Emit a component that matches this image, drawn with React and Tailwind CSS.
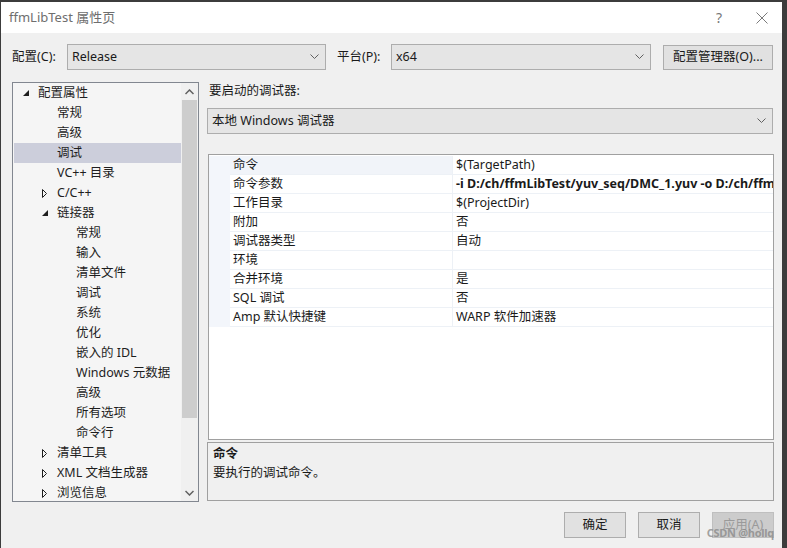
import React from "react";

const FONT = { fontFamily: '"Noto Sans", "Noto Sans CJK SC", sans-serif' };

function Chevron() {
  return (
    <svg width="9" height="6" viewBox="0 0 9 6" className="shrink-0">
      <polyline points="0.5,0.5 4.5,4.5 8.5,0.5" fill="none" stroke="#606060" strokeWidth="1" />
    </svg>
  );
}

function Select({ text, className }) {
  return (
    <div className={"flex items-center justify-between h-[26px] bg-[#e5e5e5] border border-[#adadad] pl-[4px] pr-[6px] text-[12.5px] text-[#1a1a1a] " + className}>
      <span>{text}</span>
      <Chevron />
    </div>
  );
}

function Tri({ open }) {
  if (open)
    return (
      <svg width="6" height="6" viewBox="0 0 6 6">
        <polygon points="6,0 6,6 0,6" fill="#1e1e1e" />
      </svg>
    );
  return (
    <svg width="5" height="9" viewBox="0 0 5 9">
      <polygon points="0.5,0.5 4.5,4.5 0.5,8.5" fill="none" stroke="#1e1e1e" strokeWidth="1" />
    </svg>
  );
}

const tree = [
  { t: "配置属性", l: 0, tri: "open" },
  { t: "常规", l: 1 },
  { t: "高级", l: 1 },
  { t: "调试", l: 1, sel: true },
  { t: "VC++ 目录", l: 1 },
  { t: "C/C++", l: 1, tri: "closed" },
  { t: "链接器", l: 1, tri: "open" },
  { t: "常规", l: 2 },
  { t: "输入", l: 2 },
  { t: "清单文件", l: 2 },
  { t: "调试", l: 2 },
  { t: "系统", l: 2 },
  { t: "优化", l: 2 },
  { t: "嵌入的 IDL", l: 2 },
  { t: "Windows 元数据", l: 2 },
  { t: "高级", l: 2 },
  { t: "所有选项", l: 2 },
  { t: "命令行", l: 2 },
  { t: "清单工具", l: 1, tri: "closed" },
  { t: "XML 文档生成器", l: 1, tri: "closed" },
  { t: "浏览信息", l: 1, tri: "closed" },
];

const props = [
  ["命令", "$(TargetPath)"],
  ["命令参数", "-i D:/ch/ffmLibTest/yuv_seq/DMC_1.yuv -o D:/ch/ffmLibTest/yuv_seq/out.yuv", true],
  ["工作目录", "$(ProjectDir)"],
  ["附加", "否"],
  ["调试器类型", "自动"],
  ["环境", ""],
  ["合并环境", "是"],
  ["SQL 调试", "否"],
  ["Amp 默认快捷键", "WARP 软件加速器"],
];

export default function App() {
  return (
    <div className="w-[787px] h-[548px] bg-[#3c3c3c] pt-[2px] pl-[1px] pr-[5px] overflow-hidden" style={FONT}>
      <div className="w-full h-full flex flex-col bg-[#f0f0f0]">
        {/* title bar */}
        <div className="h-[31px] bg-white flex items-center justify-between pl-[8px] pr-[14px] shrink-0">
          <span className="text-[13px] text-[#6e6e6e]">ffmLibTest 属性页</span>
          <div className="flex items-center gap-[34px]">
            <span className="text-[14px] text-[#777]">?</span>
            <svg width="12" height="12" viewBox="0 0 12 12">
              <path d="M0.5 0.5 L11.5 11.5 M11.5 0.5 L0.5 11.5" stroke="#7a7a7a" strokeWidth="1" />
            </svg>
          </div>
        </div>

        {/* config row */}
        <div className="flex items-center mt-[11px] pl-[11px] text-[12.5px] text-[#1a1a1a]">
          <span className="w-[55px]">配置(C):</span>
          <Select text="Release" className="w-[259px]" />
          <span className="ml-[11px] w-[54px]">平台(P):</span>
          <Select text="x64" className="w-[260px]" />
          <div className="ml-[12px] w-[110px] h-[25px] bg-[#e1e1e1] border border-[#adadad] flex items-center justify-center">
            配置管理器(O)...
          </div>
        </div>

        {/* main */}
        <div className="flex mt-[12px] pl-[11px]">
          {/* tree */}
          <div className="w-[187px] h-[420px] border border-[#828790] bg-[#f5f5f5] flex overflow-hidden">
            <div className="flex-1 pl-[1px] text-[12.5px] text-[#1e1e1e]">
              {tree.map((r, i) => (
                <div
                  key={i}
                  className={"h-[20px] flex items-center relative " + (r.sel ? "bg-[#cccedb]" : "")}
                  style={{ paddingLeft: 24 + r.l * 19 }}
                >
                  {r.tri && (
                    <span className="absolute flex items-center" style={{ left: 9 + r.l * 19 }}>
                      <Tri open={r.tri === "open"} />
                    </span>
                  )}
                  <span>{r.t}</span>
                </div>
              ))}
            </div>
            <div className="w-[17px] bg-[#f0f0f0] flex flex-col">
              <div className="h-[17px] flex items-center justify-center">
                <svg width="9" height="6" viewBox="0 0 9 6">
                  <polyline points="0.5,5 4.5,1 8.5,5" fill="none" stroke="#606060" strokeWidth="1.5" />
                </svg>
              </div>
              <div className="h-[318px] bg-[#cdcdcd] mx-[1px]" />
              <div className="flex-1" />
              <div className="h-[17px] flex items-center justify-center">
                <svg width="9" height="6" viewBox="0 0 9 6">
                  <polyline points="0.5,1 4.5,5 8.5,1" fill="none" stroke="#606060" strokeWidth="1.5" />
                </svg>
              </div>
            </div>
          </div>

          {/* right panel */}
          <div className="ml-[8px] w-[567px] flex flex-col">
            <div className="h-[18px] flex items-center pl-[2px] text-[12.5px] text-[#1a1a1a]">要启动的调试器:</div>
            <Select text="本地 Windows 调试器" className="mt-[8px] w-[566px]" />

            <div className="mt-[20px] ml-[1px] h-[286px] border border-[#a0a0a0] bg-white overflow-hidden pt-[1px]">
              {props.map(([k, v, bold], i) => (
                <div key={i} className="h-[19px] flex text-[12.5px] text-[#1a1a1a]">
                  <div className="w-[21px] bg-[#f3f6fb] shrink-0" />
                  <div
                    className={
                      "w-[222px] shrink-0 flex items-center pl-[3px] pt-[1px] border-b border-[#edf1f6] " +
                      (i === 0 ? "bg-[#f1f4f9]" : "bg-white")
                    }
                  >
                    {k}
                  </div>
                  <div className="w-[1px] bg-[#edf1f6] shrink-0" />
                  <div
                    className={
                      "flex-1 flex items-center pl-[3px] pt-[1px] border-b border-[#edf1f6] whitespace-nowrap overflow-hidden " +
                      (bold ? "font-bold" : "")
                    }
                  >
                    {v}
                  </div>
                </div>
              ))}
            </div>

            <div className="mt-[2px] h-[59px] border border-[#a0a0a0] bg-[#f0f0f0] px-[5px] pt-[2px] text-[12.5px] text-[#1a1a1a]">
              <div className="font-bold h-[19px] flex items-center">命令</div>
              <div className="h-[19px] flex items-center">要执行的调试命令。</div>
            </div>
          </div>
        </div>

        {/* buttons */}
        <div className="flex justify-end gap-[12px] mt-[10px] pr-[8px] text-[12.5px] relative">
          <div className="w-[62px] h-[26px] bg-[#e1e1e1] border border-[#adadad] flex items-center justify-center text-[#1a1a1a]">确定</div>
          <div className="w-[62px] h-[26px] bg-[#e1e1e1] border border-[#adadad] flex items-center justify-center text-[#1a1a1a]">取消</div>
          <div className="w-[62px] h-[26px] bg-[#cccccc] border border-[#bfbfbf] flex items-center justify-center text-[#9a9a9a]">应用(A)</div>
          <span className="absolute right-[8px] top-[13px] text-[11px] text-[#8a8a8a]/80 font-bold tracking-tight">CSDN @hollq</span>
        </div>
      </div>
    </div>
  );
}
